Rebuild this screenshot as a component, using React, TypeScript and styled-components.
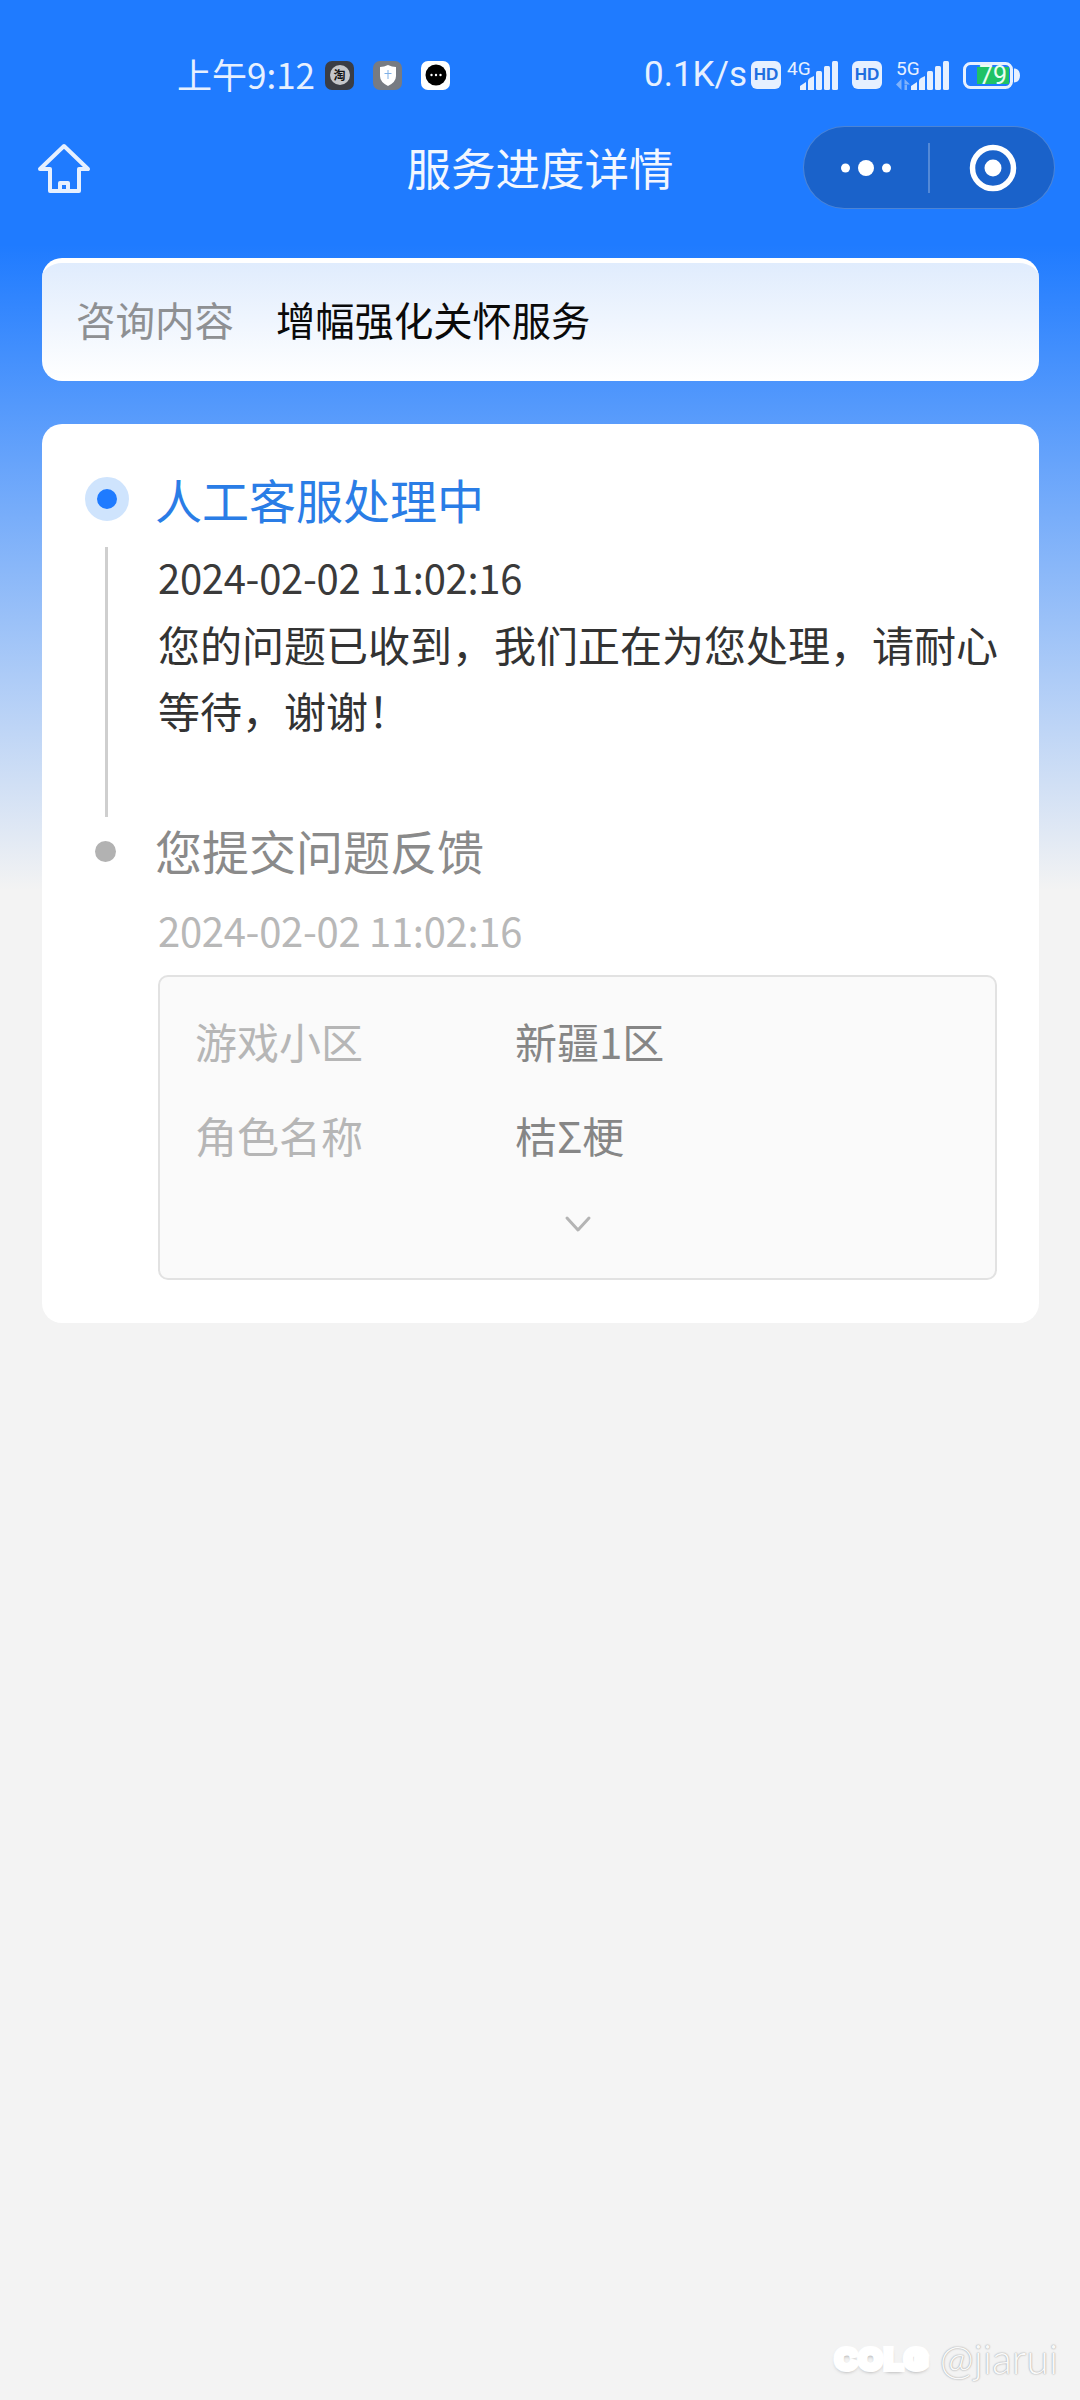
import React from "react";
import styled, { createGlobalStyle } from "styled-components";

const FONT = `"Noto Sans CJK SC", "Noto Sans", sans-serif`;

const GlobalStyle = createGlobalStyle`
  html, body {
    margin: 0;
    padding: 0;
    background: #f3f3f3;
    font-family: ${FONT};
  }
`;

const SignalBars = () => (
  <svg width="39" height="29" viewBox="0 0 39 29" fill="#e6f0ff">
    <path d="M0 29 V25 L6 21 V29 Z" />
    <path d="M8 29 V20 Q8 18 10 17 L14 15 V29 Z" />
    <rect x="16" y="10" width="6" height="19" rx="1.5" />
    <rect x="24" y="5" width="6" height="24" rx="1.5" />
    <rect x="32" y="0" width="6" height="29" rx="1.5" />
  </svg>
);

const DataArrows = () => (
  <svg width="14" height="11" viewBox="0 0 14 11" fill="#7fb2fb">
    <path d="M5.5 0 V11 L0 5.5 Z" />
    <path d="M8.5 0 L14 5.5 H8.5 Z M8.5 6 H11 V11 H8.5 Z" />
  </svg>
);

const Battery = () => (
  <svg width="57" height="27" viewBox="0 0 57 27">
    <rect x="1.5" y="1.5" width="47" height="24" rx="6" fill="none" stroke="#e6f0ff" strokeWidth="3" />
    <rect x="14" y="5" width="32" height="17" fill="#1fc266" />
    <path d="M51 6.5 c4 0 6 3 6 7 s-2 7 -6 7 z" fill="#e6f0ff" />
  </svg>
);

const HomeIcon = () => (
  <svg width="54" height="54" viewBox="0 0 54 54" fill="none" stroke="#e6f0ff" strokeWidth="4" strokeLinejoin="round" strokeLinecap="round">
    <path d="M13 28 H3 L27 5 L51 28 H42 V50 H13 Z" />
    <path d="M23 50 V42 H31 V50" />
  </svg>
);

const MoreIcon = () => (
  <svg width="50" height="18" viewBox="0 0 50 18" fill="#fff">
    <circle cx="4.500" cy="9" r="4.500" />
    <circle cx="25" cy="9" r="8" />
    <circle cx="45.500" cy="9" r="4.500" />
  </svg>
);

const TargetIcon = () => (
  <svg width="48" height="48" viewBox="0 0 48 48">
    <circle cx="24" cy="24" r="20.500" fill="none" stroke="#fff" strokeWidth="5.500" />
    <circle cx="24" cy="24" r="8.500" fill="#fff" />
  </svg>
);

const ChevronIcon = () => (
  <svg width="28" height="18" viewBox="0 0 28 18" fill="none" stroke="#b4b4b4" strokeWidth="3" strokeLinecap="round" strokeLinejoin="round">
    <path d="M3 3 L14 15 L25 3" />
  </svg>
);

const ShieldIcon = () => (
  <svg width="18" height="21" viewBox="0 0 18 21">
    <path d="M1 2 Q5 2 9 0 Q13 2 17 2 V11 Q17 17 9 21 Q1 17 1 11 Z" fill="#fff" />
    <path d="M9 5 V14 M5.500 8.500 H12.500" stroke="#7fb0e6" strokeWidth="1" />
  </svg>
);

const ChatIcon = () => (
  <svg width="22" height="22" viewBox="0 0 22 22">
    <circle cx="11" cy="11" r="10.500" fill="#000" />
    <circle cx="6.500" cy="11" r="1.200" fill="#fff" />
    <circle cx="11" cy="11" r="1.200" fill="#fff" />
    <circle cx="15.500" cy="11" r="1.200" fill="#fff" />
  </svg>
);

const App = () => {
  return (
    <>
      <GlobalStyle />
      <Page>
        <StatusBar>
          <StatusLeft>
            <Clock>上午9:12</Clock>
            <AppBadges>
              <AppBadge $bg="#3a3d45">
                <TaoDot>淘</TaoDot>
              </AppBadge>
              <AppBadge $bg="#777b82">
                <ShieldIcon />
              </AppBadge>
              <AppBadge $bg="#fff">
                <ChatIcon />
              </AppBadge>
            </AppBadges>
          </StatusLeft>
          <StatusRight>
            <Speed>0.1K/s</Speed>
            <HdBadge>HD</HdBadge>
            <Network $width={52} $left={6}>
              <NetLabel>4G</NetLabel>
              <SignalBars />
            </Network>
            <HdBadge $left={13}>HD</HdBadge>
            <Network $width={54} $left={14}>
              <NetLabel>5G</NetLabel>
              <ArrowSlot>
                <DataArrows />
              </ArrowSlot>
              <SignalBars />
            </Network>
            <BatteryWrap>
              <Battery />
              <BatteryText>79</BatteryText>
            </BatteryWrap>
          </StatusRight>
        </StatusBar>

        <NavBar>
          <HomeIcon />
          <NavTitle>服务进度详情</NavTitle>
          <Capsule>
            <CapsuleCell>
              <MoreIcon />
            </CapsuleCell>
            <CapsuleDivider />
            <CapsuleCell $shift={3}>
              <TargetIcon />
            </CapsuleCell>
          </Capsule>
        </NavBar>

        <Content>
          <QueryCard>
            <QueryLabel>咨询内容</QueryLabel>
            <QueryValue>增幅强化关怀服务</QueryValue>
          </QueryCard>

          <ProgressCard>
            <Step>
              <Rail>
                <ActiveDot />
                <RailLine />
              </Rail>
              <StepBody>
                <StepTitle $active>人工客服处理中</StepTitle>
                <StepTime>2024-02-02 11:02:16</StepTime>
                <StepText>您的问题已收到，我们正在为您处理，请耐心等待，谢谢！</StepText>
              </StepBody>
            </Step>
            <Step>
              <Rail>
                <IdleDot />
              </Rail>
              <StepBody>
                <StepTitle>您提交问题反馈</StepTitle>
                <StepTime $muted>2024-02-02 11:02:16</StepTime>
                <DetailBox>
                  <DetailRow>
                    <DetailLabel>游戏小区</DetailLabel>
                    <DetailValue>新疆1区</DetailValue>
                  </DetailRow>
                  <DetailRow>
                    <DetailLabel>角色名称</DetailLabel>
                    <DetailValue>桔Σ梗</DetailValue>
                  </DetailRow>
                  <Expand>
                    <ChevronIcon />
                  </Expand>
                </DetailBox>
              </StepBody>
            </Step>
          </ProgressCard>
        </Content>

        <Watermark>
          <WatermarkLogo>COLG</WatermarkLogo>
          <WatermarkUser>@jiarui</WatermarkUser>
        </Watermark>
      </Page>
    </>
  );
};

export default App;

const Page = styled.div`
  position: relative;
  height: 2400px;
  overflow: hidden;
  background: linear-gradient(#1f7bff 0, #1f7bff 245px, #f3f3f3 890px);
`;

const StatusBar = styled.div`
  height: 125px;
  box-sizing: border-box;
  padding: 50px 60px 0 177px;
  display: flex;
  justify-content: space-between;
  align-items: flex-start;
  color: #e6f0ff;
`;

const StatusLeft = styled.div`
  display: flex;
  align-items: center;
  height: 50px;
`;

const Clock = styled.div`
  font-size: 35px;
  line-height: 46px;
  margin-top: -3px;
  width: 148px;
  white-space: nowrap;
`;

const AppBadges = styled.div`
  display: flex;
  gap: 19px;
`;

const AppBadge = styled.div<{ $bg: string }>`
  width: 29px;
  height: 29px;
  border-radius: 7px;
  background: ${(p) => p.$bg};
  display: flex;
  align-items: center;
  justify-content: center;
`;

const TaoDot = styled.div`
  width: 20px;
  height: 20px;
  border-radius: 50%;
  background: #c4c6ca;
  color: #111;
  font-size: 12px;
  line-height: 20px;
  text-align: center;
  font-weight: 700;
`;

const StatusRight = styled.div`
  display: flex;
  align-items: center;
  height: 50px;
`;

const Speed = styled.div`
  font-size: 35px;
  line-height: 50px;
  width: 107px;
  white-space: nowrap;
  font-family: Roboto, ${FONT};
`;

const HdBadge = styled.div<{ $left?: number }>`
  width: 30px;
  height: 28px;
  margin-left: ${(p) => p.$left ?? 0}px;
  border-radius: 6px;
  background: #e6f0ff;
  color: #1f6fe0;
  font-family: "Liberation Sans", sans-serif;
  font-size: 17px;
  font-weight: 700;
  line-height: 28px;
  text-align: center;
`;

const Network = styled.div<{ $width: number; $left: number }>`
  position: relative;
  width: ${(p) => p.$width}px;
  height: 29px;
  margin-left: ${(p) => p.$left}px;
  display: flex;
  justify-content: flex-end;
  align-items: flex-end;
`;

const NetLabel = styled.div`
  position: absolute;
  left: 0;
  top: -2px;
  font-family: Roboto, sans-serif;
  font-size: 19px;
  line-height: 19px;
`;

const ArrowSlot = styled.div`
  position: absolute;
  left: 0;
  bottom: 0;
  line-height: 0;
`;

const BatteryWrap = styled.div`
  position: relative;
  width: 57px;
  height: 27px;
  margin-left: 13px;
`;

const BatteryText = styled.div`
  position: absolute;
  left: 12px;
  top: 0;
  width: 36px;
  text-align: center;
  color: #e9fff1;
  font-size: 25px;
  line-height: 27px;
  font-family: Roboto, sans-serif;
`;

const NavBar = styled.div`
  height: 85px;
  padding: 0 25px 0 37px;
  display: flex;
  align-items: center;
  justify-content: space-between;
  position: relative;
`;

const NavTitle = styled.div`
  position: absolute;
  left: 0;
  top: 0;
  width: 1080px;
  text-align: center;
  color: #f2f7ff;
  font-size: 44.5px;
  line-height: 83px;
`;

const Capsule = styled.div`
  width: 252px;
  height: 83px;
  box-sizing: border-box;
  border-radius: 42px;
  border: 1.5px solid rgba(255, 255, 255, 0.22);
  background: #1a62ca;
  display: grid;
  grid-template-columns: 1fr 1.5px 1fr;
  align-items: center;
`;

const CapsuleCell = styled.div<{ $shift?: number }>`
  display: flex;
  align-items: center;
  justify-content: center;
  padding-left: ${(p) => p.$shift ?? 0}px;
`;

const CapsuleDivider = styled.div`
  height: 50px;
  background: rgba(255, 255, 255, 0.25);
`;

const Content = styled.div`
  padding: 48px 41px 0 42px;
  display: flex;
  flex-direction: column;
  gap: 43px;
`;

const QueryCard = styled.div`
  height: 123px;
  box-sizing: border-box;
  padding: 0 0 7px 34px;
  border-radius: 20px;
  border-top: 5px solid #fff;
  background: linear-gradient(#e0ecfd, #ffffff);
  display: flex;
  align-items: center;
`;

const QueryLabel = styled.div`
  width: 200px;
  color: #8e9093;
  font-size: 39.5px;
  white-space: nowrap;
`;

const QueryValue = styled.div`
  color: #0a0a0a;
  font-size: 39.3px;
  white-space: nowrap;
`;

const ProgressCard = styled.div`
  height: 899px;
  box-sizing: border-box;
  padding: 53px 42px 0 43px;
  border-radius: 20px;
  background: #fff;
`;

const Step = styled.div`
  display: flex;
`;

const Rail = styled.div`
  width: 44px;
  margin-right: 29px;
  display: flex;
  flex-direction: column;
  align-items: center;
  flex-shrink: 0;
`;

const ActiveDot = styled.div`
  width: 44px;
  height: 44px;
  box-sizing: border-box;
  border: 12px solid #cfe4fd;
  border-radius: 50%;
  background: #1f7bff;
`;

const IdleDot = styled.div`
  width: 21px;
  height: 21px;
  margin: 13px 3px 0 0;
  border-radius: 50%;
  background: #b2b2b2;
`;

const RailLine = styled.div`
  width: 3px;
  height: 270px;
  margin: 26px 1px 0 0;
  background: #cfcfcf;
`;

const StepBody = styled.div`
  flex: 1;
  min-width: 0;
`;

const StepTitle = styled.div<{ $active?: boolean }>`
  margin: -8px 0 0 -3px;
  height: 60px;
  font-size: 47px;
  line-height: 60px;
  white-space: nowrap;
  color: ${(p) => (p.$active ? "#2a7de6" : "#8a8a8a")};
`;

const StepTime = styled.div<{ $muted?: boolean }>`
  margin-top: ${(p) => (p.$muted ? 25 : 23)}px;
  font-size: 40px;
  line-height: 50px;
  letter-spacing: -0.3px;
  white-space: nowrap;
  color: ${(p) => (p.$muted ? "#b8b8b8" : "#3a3a3a")};
`;

const StepText = styled.div`
  margin: 9px -6px 0 0;
  height: 217px;
  font-size: 42px;
  line-height: 66px;
  color: #333;
`;

const DetailBox = styled.div`
  margin-top: 20px;
  height: 305px;
  box-sizing: border-box;
  padding: 29px 35px 0;
  border: 2px solid #e2e2e2;
  border-radius: 10px;
  background: #fafafa;
`;

const DetailRow = styled.div`
  display: flex;
  height: 94px;
  line-height: 70px;
  font-size: 42px;
  white-space: nowrap;
`;

const DetailLabel = styled.div`
  width: 320px;
  color: #b6b6b6;
`;

const DetailValue = styled.div`
  color: #868686;
`;

const Expand = styled.div`
  margin-top: 21px;
  display: flex;
  justify-content: center;
`;

const Watermark = styled.div`
  position: absolute;
  right: 22px;
  bottom: 19px;
  display: flex;
  align-items: center;
  gap: 10px;
`;

const WatermarkLogo = styled.div`
  font-family: "Liberation Sans", sans-serif;
  font-weight: 700;
  font-size: 30px;
  line-height: 40px;
  letter-spacing: 2px;
  color: #fff;
  -webkit-text-stroke: 6px #fff;
  text-shadow: 0 2px 4px #666, 0 0 3px #888;
`;

const WatermarkUser = styled.div`
  font-family: Lato, sans-serif;
  font-weight: 300;
  font-size: 41px;
  line-height: 44px;
  color: #f9f9f9;
  text-shadow: 0 0 2px #b0b0b0, 0 0 1px #a0a0a0;
`;
